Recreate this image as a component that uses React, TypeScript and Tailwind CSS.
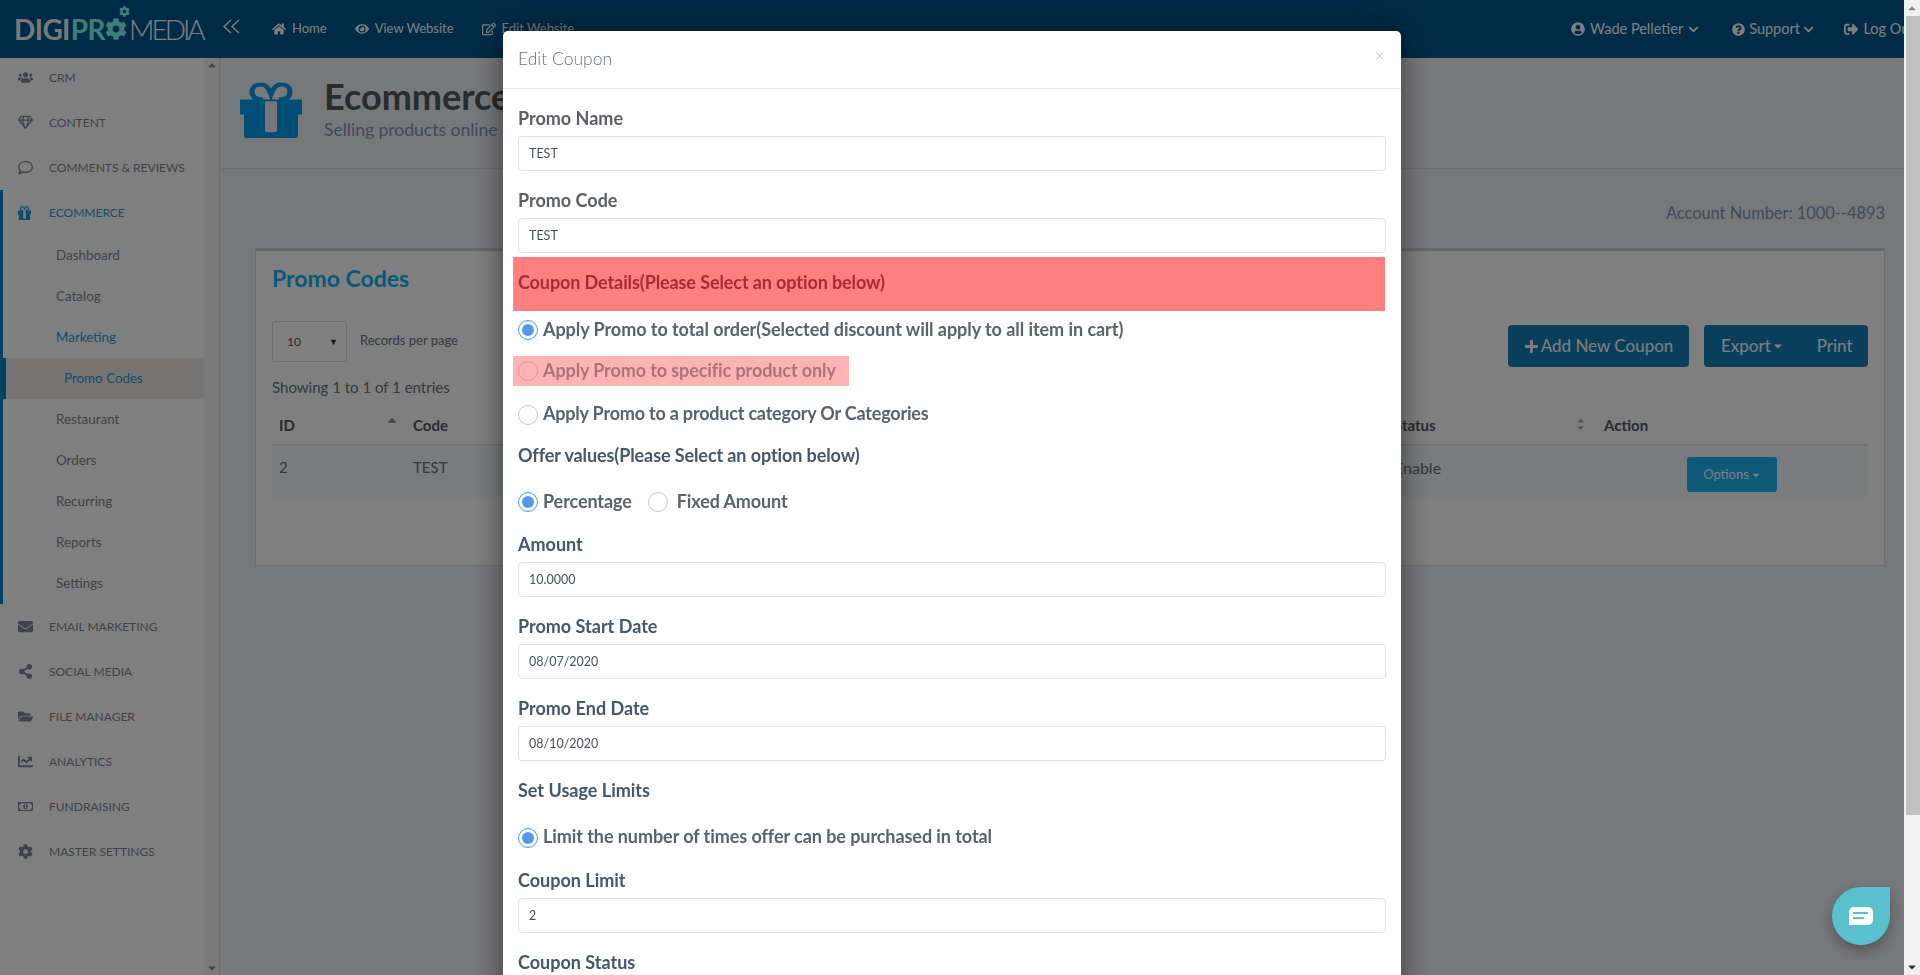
import React from 'react'
import {
  FaCaretDown,
  FaCaretUp,
  FaChartLine,
  FaChevronDown,
  FaCog,
  FaEnvelope,
  FaEye,
  FaFolderOpen,
  FaHome,
  FaPlus,
  FaQuestionCircle,
  FaRegComment,
  FaRegEdit,
  FaRegGem,
  FaRegMoneyBillAlt,
  FaShareAlt,
  FaSignOutAlt,
  FaUserCircle,
  FaUsers,
} from 'react-icons/fa'

const topBefore = [
  { label: 'CRM', icon: <FaUsers /> },
  { label: 'CONTENT', icon: <FaRegGem /> },
  { label: 'COMMENTS & REVIEWS', icon: <FaRegComment /> },
]

const topAfter = [
  { label: 'EMAIL MARKETING', icon: <FaEnvelope /> },
  { label: 'SOCIAL MEDIA', icon: <FaShareAlt /> },
  { label: 'FILE MANAGER', icon: <FaFolderOpen /> },
  { label: 'ANALYTICS', icon: <FaChartLine /> },
  { label: 'FUNDRAISING', icon: <FaRegMoneyBillAlt /> },
  { label: 'MASTER SETTINGS', icon: <FaCog /> },
]

// the gift in the reference has two ribbon loops and an open centre band
const GiftIcon = ({ className = '' }: { className?: string }) => (
  <svg viewBox="0 0 62 67" preserveAspectRatio="none" className={className}>
    <path d="M23 21c-7 0-11-3-11-9s4-9 9-9c6 0 8 6 10 12 2-6 4-12 10-12 5 0 9 3 9 9s-4 9-11 9" fill="none" stroke="currentColor" strokeWidth="5" />
    <path
      fillRule="evenodd"
      fill="currentColor"
      d="M0 21h62v18h-4v25a3 3 0 0 1-3 3H7a3 3 0 0 1-3-3V39H0zM25 23v35a2 2 0 0 0 2 2h8a2 2 0 0 0 2-2V23z"
    />
  </svg>
)

const SideItem = ({ label, icon }: { label: string; icon: React.ReactNode }) => (
  <div className="h-[45px] flex items-center pl-[18px] text-[12px] text-[#7e868e]">
    <span className="w-[31px] text-[15px]">{icon}</span>
    {label}
  </div>
)

const SubItem = ({ label, blue }: { label: string; blue?: boolean }) => (
  <div className={`h-[41px] flex items-center pl-[53px] text-[13.4px] ${blue ? 'text-[#1c9ad6]' : 'text-[#7e868e]'}`}>
    {label}
  </div>
)

const Radio = ({ checked, className = '' }: { checked?: boolean; className?: string }) => (
  <span
    className={`w-5 h-5 rounded-full border flex items-center justify-center shrink-0 bg-white ${
      checked ? 'border-[#3aa0e8] border-[1.5px]' : 'border-[#c4c8cc]'
    } ${className}`}
  >
    {checked && <span className="w-3 h-3 rounded-full bg-[#5b95ee]" />}
  </span>
)

const Field = ({ label, value, gray }: { label: string; value: string; gray?: boolean }) => (
  <div>
    <div className={`h-[36px] flex items-center text-[18px] font-bold ${gray ? 'text-[#5c6064]' : 'text-[#44586a]'}`}>{label}</div>
    <div className="h-[35px] w-[868px] border border-[#dde5e8] rounded-[4px] flex items-center pl-[10px] pt-[2px] text-[12.5px] text-[#4a5058]">
      {value}
    </div>
  </div>
)

const Backdrop = () => <div className="fixed top-0 left-0 bottom-0 w-[1904px] bg-black/50" />

const Logo = () => (
  <div className="flex items-center w-[222px] pl-[14px] text-[28px] leading-none">
    <span className="font-bold text-white/95 tracking-[-0.6px]">DIGI</span>
    <span className="font-bold text-[#7dfaf0] tracking-[-0.6px] ml-[1px]">PR</span>
    <span className="relative w-[23px] h-[24px] text-[#7dfaf0]">
      <FaCog className="text-[22px] absolute top-[1px] left-0" />
      <FaCog className="text-[11px] absolute -top-[11px] left-[14px]" />
    </span>
    <span className="font-light text-white ml-[1px] tracking-[-3px]">MEDIA</span>
  </div>
)

const Header = () => (
  <header className="h-[58px] bg-[#00568e] flex items-center text-white text-[13px] shrink-0">
    <Logo />
    <svg width="20" height="16" viewBox="0 0 20 16" fill="none" stroke="currentColor" strokeWidth="1.3" className="mr-[30px] -mt-[4px]">
      <path d="M9 1 2 7.5 9 14M17 1l-7 6.5 7 6.5" />
    </svg>
    <nav className="flex items-center gap-[28px]">
      <span className="flex items-center gap-[6px]"><FaHome className="text-[14px]" />Home</span>
      <span className="flex items-center gap-[6px]"><FaEye className="text-[14px]" />View Website</span>
      <span className="flex items-center gap-[6px]"><FaRegEdit className="text-[14px]" />Edit Website</span>
    </nav>
    <div className="ml-auto flex items-center whitespace-nowrap w-[349px] text-[14.5px]">
      <span className="flex items-center gap-[5px] mr-[33px]"><FaUserCircle className="text-[14px]" />Wade Pelletier<FaChevronDown className="text-[11px]" /></span>
      <span className="flex items-center gap-[4px] mr-[30px]"><FaQuestionCircle className="text-[13px]" />Support<FaChevronDown className="text-[11px] -ml-[1px]" /></span>
      <span className="flex items-center gap-[5px]"><FaSignOutAlt />Log Out</span>
    </div>
  </header>
)

const Sidebar = () => (
  <aside className="w-[220px] flex shrink-0 bg-[#f4f4f4] border-r border-[#d8d8d8]">
    <div className="w-[204px] bg-white overflow-hidden">
      <div className="-mt-[3px]">
        {topBefore.map(i => <SideItem key={i.label} {...i} />)}
        <div className="border-l-[3px] border-[#0084c8]">
          <div className="h-[45px] flex items-center pl-[15px] text-[12px] text-[#1c9ad6]">
            <span className="w-[31px]"><GiftIcon className="w-[13px] h-[14px]" /></span>ECOMMERCE
          </div>
          <SubItem label="Dashboard" />
          <SubItem label="Catalog" />
          <SubItem label="Marketing" blue />
          <div className="h-[41px] flex items-center pl-[58px] -ml-[3px] text-[13.4px] text-[#1c9ad6] bg-[#eee9e9] border-l-[6px] border-[#0084c8]">
            Promo Codes
          </div>
          <SubItem label="Restaurant" />
          <SubItem label="Orders" />
          <SubItem label="Recurring" />
          <SubItem label="Reports" />
          <SubItem label="Settings" />
        </div>
        {topAfter.map(i => <SideItem key={i.label} {...i} />)}
      </div>
    </div>
    <div className="flex-1 flex flex-col justify-between items-center text-[#8a8a8a] text-[12px] py-[1px]">
      <FaCaretUp />
      <FaCaretDown />
    </div>
  </aside>
)

const Main = () => (
  <main className="flex-1 bg-[#eff0f4] overflow-hidden">
    <div className="h-[111px] border-b border-[#dcdfe3] flex items-start pl-[20px] pt-[7px]">
      <GiftIcon className="text-[#009cf0] w-[62px] h-[56px] mt-[17px]" />
      <div className="ml-[22px]">
        <div className="text-[36px] font-bold text-[#50565e] leading-[46px] mt-[8px]">Ecommerce</div>
        <div className="text-[17.5px] text-[#7c94c0] leading-[22px]">Selling products online l</div>
      </div>
    </div>
    <div className="h-[79px] pr-[19px] pt-[33px] text-right text-[16.4px] leading-[22px] text-[#7c94c0]">
      Account Number: 1000--4893
    </div>
    <section className="ml-[35px] w-[1630px] h-[318px] bg-white border border-[#d9dde2] border-t-[3px] border-t-[#c9d2d8] px-[16px] text-[14px] text-[#6b7178]">
      <h2 className="text-[23px] font-bold text-[#14b0f8] leading-[30px] mt-[12px]">Promo Codes</h2>
      <div className="flex items-start mt-[28px] h-[55px]">
        <div className="w-[75px] h-[41px] border border-[#dcdcdc] rounded-[2px] flex items-center justify-between pl-[14px] pr-[8px] text-[12px] text-[#555]">
          10<span className="text-[9px] text-[#333]">▼</span>
        </div>
        <span className="ml-[13px] text-[13px] leading-[38px]">Records per page</span>
        <div className="ml-auto mt-[4px] flex gap-[15px] text-[17px] text-white">
          <span className="h-[42px] w-[181px] bg-[#147eb8] rounded-[4px] flex items-center justify-center gap-[2px]"><FaPlus className="text-[15px]" />Add New Coupon</span>
          <span className="h-[42px] w-[164px] bg-[#147eb8] rounded-[4px] flex items-center pl-[17px]">
            Export<FaCaretDown className="text-[12px] ml-[1px]" /><span className="ml-[33px]">Print</span>
          </span>
        </div>
      </div>
      <div className="text-[15px] leading-[22px]">Showing 1 to 1 of 1 entries</div>
      <div>
        <div className="h-[48px] pt-[8px] flex items-center border-b-[2px] border-[#e3e5e7] text-[15px] font-bold text-[#50565e] relative">
          <span className="pl-[7px] w-[141px]">ID</span>
          <span>Code</span>
          <FaCaretUp className="absolute left-[113px] top-[15px] text-[#888] text-[14px]" />
          <span className="absolute left-[1122px]">Status</span>
          <span className="absolute left-[1303px] top-[17px] flex flex-col text-[#aaa] text-[11px] leading-none">
            <FaCaretUp className="-mb-[4px]" />
            <FaCaretDown />
          </span>
          <span className="absolute left-[1332px]">Action</span>
        </div>
        <div className="h-[51px] bg-[#f0f8fa] flex text-[15px] relative">
          <span className="pl-[7px] w-[141px] pt-[10px]">2</span>
          <span className="pt-[10px]">TEST</span>
          <span className="absolute left-[1122px] top-[10px] text-[16px]">Enable</span>
          <span className="absolute left-[1415px] top-[11px] w-[90px] h-[35px] bg-[#1cb0f0] text-white rounded-[3px] text-[13px] flex items-center justify-center">Options<FaCaretDown className="text-[10px] ml-[2px]" /></span>
        </div>
      </div>
    </section>
  </main>
)

const Scrollbar = () => (
  <div className="w-[16px] bg-[#f1f1f1] flex flex-col items-center shrink-0 fixed top-0 right-0 bottom-0 z-30">
    <FaCaretUp className="text-[#8a8a8a] text-[12px] mt-[2px] mb-[2px]" />
    <div className="w-[14px] ml-[2px] h-[799px] bg-[#c1c1c1]" />
    <FaCaretDown className="text-[#333] text-[12px] mt-auto mb-[2px]" />
  </div>
)

const Modal = () => (
  <div className="fixed top-[31px] left-[503px] w-[898px] h-[1100px] bg-white rounded-[5px] shadow-[0_0_30px_rgba(0,0,0,0.5)] z-20">
    <div className="h-[58px] border-b border-[#e6e8ea] flex items-center justify-between pl-[15px] pr-[16px] text-[17.5px] font-light text-[#6a7075]">
      Edit Coupon
      <span className="text-[#c4c8cc] text-[18px] -mt-[8px]">×</span>
    </div>
    <div className="pl-[15px] pt-[11px]">
      <div className="flex flex-col gap-[11px]">
        <Field label="Promo Name" value="TEST" gray />
        <Field label="Promo Code" value="TEST" gray />
      </div>
      <div className="-ml-[5px] mt-[4px] w-[872px] h-[54px] pb-[4px] bg-[#ff8080] flex items-center pl-[5px] text-[18px] font-bold text-[#a82c33] tracking-[-0.1px]">
        Coupon Details(Please Select an option below)
      </div>
      <div className="h-[38px] flex items-center gap-[5px] text-[18px] tracking-[-0.05px] font-bold text-[#5c6268]">
        <Radio checked /><span className="-mt-[2px]">Apply Promo to total order(Selected discount will apply to all item in cart)</span>
      </div>
      <div className="h-[30px] w-[336px] -ml-[5px] pl-[5px] flex items-center gap-[5px] text-[18px] tracking-[-0.1px] font-bold text-[#aa7478] bg-[#ffb3b3] mt-[7px]">
        <span className="w-5 h-5 rounded-full border border-[#d99a9a] shrink-0" /><span className="-mt-[1px]">Apply Promo to specific product only</span>
      </div>
      <div className="h-[44px] mt-[7px] flex items-center gap-[5px] text-[18px] tracking-[-0.2px] font-bold text-[#5c6268]">
        <Radio /><span className="-mt-[3px]">Apply Promo to a product category Or Categories</span>
      </div>
      <div className="h-[36px] flex items-center text-[18px] font-bold text-[#44586a] tracking-[-0.1px]">Offer values(Please Select an option below)</div>
      <div className="h-[48px] mt-[5px] flex items-center text-[18px] font-bold text-[#5c6268] tracking-[-0.1px]">
        <Radio checked /><span className="ml-[5px] -mt-[2px]">Percentage</span>
        <Radio className="ml-[16px]" /><span className="ml-[9px] -mt-[2px]">Fixed Amount</span>
      </div>
      <div className="flex flex-col gap-[11px]">
        <Field label="Amount" value="10.0000" />
        <Field label="Promo Start Date" value="08/07/2020" />
        <Field label="Promo End Date" value="08/10/2020" />
      </div>
      <div className="h-[36px] mt-[11px] flex items-center text-[18px] font-bold text-[#44586a]">Set Usage Limits</div>
      <div className="h-[48px] mt-[6px] flex items-center gap-[5px] text-[18px] font-bold text-[#5c6268] tracking-[-0.07px]">
        <Radio checked /><span className="-mt-[3px]">Limit the number of times offer can be purchased in total</span>
      </div>
      <Field label="Coupon Limit" value="2" />
      <div className="h-[36px] mt-[11px] flex items-center text-[18px] font-bold text-[#44586a]">Coupon Status</div>
    </div>
  </div>
)

const ChatBubble = () => (
  <div className="fixed left-[1832px] top-[887px] w-[58px] h-[58px] bg-[#5bc0ce] rounded-full rounded-tr-[6px] shadow-[0_6px_14px_rgba(0,0,0,0.3)] z-20 flex items-center justify-center">
    <svg width="24" height="18" viewBox="0 0 24 18">
      <path d="M0 5a5 5 0 0 1 5-5h14a5 5 0 0 1 5 5v8a5 5 0 0 1-5 5H0z" fill="#fff" />
      <path d="M4 6h15M4 11h11" stroke="#5bc0ce" strokeWidth="2" />
    </svg>
  </div>
)

export default function App() {
  return (
    <div className="h-screen overflow-hidden font-['Lato',sans-serif] flex flex-col bg-[#eff0f4]">
      <Header />
      <div className="flex flex-1 overflow-hidden w-[1904px]">
        <Sidebar />
        <Main />
      </div>
      <Backdrop />
      <Modal />
      <ChatBubble />
      <Scrollbar />
    </div>
  )
}
